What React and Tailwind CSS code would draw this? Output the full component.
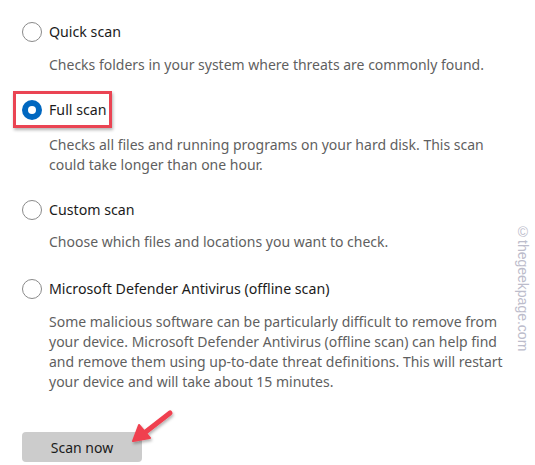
import React from 'react';

const FONT = { fontFamily: '"Noto Sans", "Open Sans", sans-serif' };

function Radio({ checked }) {
  if (checked) {
    return (
      <span className="w-5 h-5 rounded-full bg-[#0067c0] flex items-center justify-center shrink-0">
        <span className="w-2 h-2 rounded-full bg-white" />
      </span>
    );
  }
  return <span className="w-5 h-5 rounded-full border border-[#8a8a8a] bg-white shrink-0" />;
}

function Option({ label, checked, highlight, className }) {
  return (
    <div className={`relative flex items-center h-5 gap-[7px] ${className || ''}`}>
      {highlight && (
        <div className="absolute left-[-9px] top-[-9px] w-[99px] h-[37px] border-[3px] border-[#ea4453] shadow-[1px_2px_3px_rgba(0,0,0,0.3)]" />
      )}
      <Radio checked={checked} />
      <span className="text-[14.2px] text-[#1b1b1b] leading-5">{label}</span>
    </div>
  );
}

function Desc({ lines, className }) {
  return (
    <div className={`pl-[27px] text-[14px] leading-5 text-[#5f5f5f] ${className || ''}`}>
      {lines.map(l => (
        <div key={l} className="whitespace-nowrap">{l}</div>
      ))}
    </div>
  );
}

export default function App() {
  return (
    <div className="relative w-[535px] h-[465px] bg-white overflow-hidden" style={FONT}>
      <div className="pt-[22px] pl-[22px]">
        <Option label="Quick scan" />
        <Desc className="mt-[13px]" lines={['Checks folders in your system where threats are commonly found.']} />

        <Option label="Full scan" checked highlight className="mt-[25px]" />
        <Desc
          className="mt-[15px]"
          lines={[
            'Checks all files and running programs on your hard disk. This scan',
            'could take longer than one hour.',
          ]}
        />

        <Option label="Custom scan" className="mt-[25px]" />
        <Desc className="mt-[12px]" lines={['Choose which files and locations you want to check.']} />

        <Option label="Microsoft Defender Antivirus (offline scan)" className="mt-[27px]" />
        <Desc
          className="mt-[13px]"
          lines={[
            'Some malicious software can be particularly difficult to remove from',
            'your device. Microsoft Defender Antivirus (offline scan) can help find',
            'and remove them using up-to-date threat definitions. This will restart',
            'your device and will take about 15 minutes.',
          ]}
        />

        <button className="mt-[40px] w-[120px] h-[30px] rounded bg-[#cccccc] text-[14px] text-[#1b1b1b]">
          Scan now
        </button>
      </div>

      <svg className="absolute left-0 top-0" width="535" height="465">
        <defs>
          <filter id="sh" x="-20%" y="-20%" width="140%" height="140%">
            <feDropShadow dx="1" dy="2" stdDeviation="1.5" floodOpacity="0.3" />
          </filter>
        </defs>
        <g filter="url(#sh)" fill="#f0414f" stroke="#f0414f">
          <line x1="170" y1="413" x2="143" y2="434" strokeWidth="5" strokeLinecap="round" />
          <polygon points="133,441 139,425 150,438" strokeWidth="2" strokeLinejoin="round" />
        </g>
      </svg>

      <div className="absolute left-[516px] top-[224px] [writing-mode:vertical-rl] text-[14px] text-[#bcbccb] leading-none" style={{ fontFamily: '"Liberation Sans", sans-serif' }}>
        ©thegeekpage.com
      </div>
    </div>
  );
}
